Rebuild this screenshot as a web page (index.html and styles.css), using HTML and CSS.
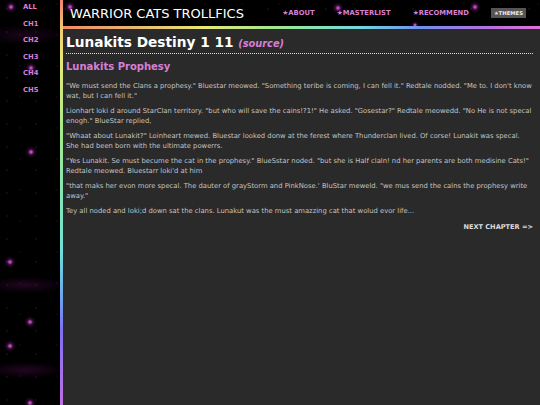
FILE: index.html
```html
<!DOCTYPE html>
<html>
<head>
<meta charset="utf-8">
<link rel="stylesheet" href="styles.css">
</head>
<body>
<div class="page">
  <aside class="sidebar">
    <a class="side-link" href="#">ALL</a>
    <a class="side-link" href="#">CH1</a>
    <a class="side-link" href="#">CH2</a>
    <a class="side-link" href="#">CH3</a>
    <a class="side-link" href="#">CH4</a>
    <a class="side-link" href="#">CH5</a>
  </aside>
  <div class="main">
    <header class="topbar">
      <div class="site-title">WARRIOR CATS TROLLFICS</div>
      <nav class="topnav">
        <a class="top-link" href="#">★ABOUT</a>
        <a class="top-link" href="#">★MASTERLIST</a>
        <a class="top-link" href="#">★RECOMMEND</a>
        <button class="themes-btn">★THEMES</button>
      </nav>
    </header>
    <div class="rule"></div>
    <main class="content">
      <h1 class="story-title">Lunakits Destiny 1 11 <a class="source" href="#">(source)</a></h1>
      <h2 class="chapter-title">Lunakits Prophesy</h2>
      <p>"We must send the Clans a prophesy." Bluestar meowed. "Something teribe is coming, I can fell it." Redtale nodded. "Me to. I don't know wat, but I can fell it."</p>
      <p>Lionhart loki d around StarClan territory. "but who will save the cains!?1!" He asked. "Gosestar?" Redtale meowedd. "No He is not specal enogh." BlueStar replied,</p>
      <p>"Whaat about Lunakit?" Loinheart mewed. Bluestar looked donw at the ferest where Thunderclan lived. Of corse! Lunakit was specal. She had been born with the ultimate powerrs.</p>
      <p>"Yes Lunakit. Se must becume the cat in the prophesy." BlueSstar noded. "but she is Half claln! nd her parents are both medisine Cats!" Redtale meowed. Bluestarr loki'd at him</p>
      <p>"that maks her evon more specal. The dauter of grayStorm and PinkNose.' BluStar meweld. "we mus send the calns the prophesy write away."</p>
      <p>Tey all noded and loki;d down sat the clans. Lunakut was the must amazzing cat that wolud evor life...</p>
      <div class="next-row"><a class="next-link" href="#">NEXT CHAPTER =&gt;</a></div>
    </main>
  </div>
</div>
</body>
</html>
```
FILE: styles.css
```css
html, body {
  margin: 0;
  padding: 0;
}
body {
  width: 540px;
  height: 405px;
  overflow: hidden;
  font-family: "DejaVu Sans", Verdana, sans-serif;
  background-color: #000;
  background-image:
    radial-gradient(circle at 11px 7px, #e070e0 0, #b040b0 1px, rgba(160,40,160,0.25) 3px, transparent 6px),
    radial-gradient(circle at 31px 68px, #e070e0 0, #b040b0 1px, rgba(160,40,160,0.25) 3px, transparent 6px),
    radial-gradient(circle at 31px 152px, #e070e0 0, #b040b0 1px, rgba(160,40,160,0.25) 3px, transparent 6px),
    radial-gradient(circle at 10px 262px, #e070e0 0, #b040b0 1px, rgba(160,40,160,0.25) 3px, transparent 6px),
    radial-gradient(circle at 30px 322px, #e070e0 0, #b040b0 1px, rgba(160,40,160,0.25) 3px, transparent 6px),
    radial-gradient(circle at 10px 346px, #e070e0 0, #b040b0 1px, rgba(160,40,160,0.25) 3px, transparent 6px),
    radial-gradient(circle at 30px 403px, #e070e0 0, #b040b0 1px, rgba(160,40,160,0.25) 3px, transparent 6px),
    radial-gradient(circle at 70px 7px, #e070e0 0, #b040b0 1px, rgba(160,40,160,0.25) 3px, transparent 6px),
    radial-gradient(circle at 338px 8px, #e070e0 0, #b040b0 1px, rgba(160,40,160,0.25) 3px, transparent 6px),
    radial-gradient(circle at 475px 7px, #e070e0 0, #b040b0 1px, rgba(160,40,160,0.25) 3px, transparent 6px),
    radial-gradient(circle at 415px 25px, #e070e0 0, #b040b0 1px, rgba(160,40,160,0.25) 2px, transparent 4px),
    radial-gradient(ellipse 40px 8px at 25px 285px, rgba(110,20,110,0.3), transparent),
    radial-gradient(ellipse 40px 8px at 25px 370px, rgba(110,20,110,0.3), transparent),
    radial-gradient(ellipse 40px 10px at 25px 35px, rgba(110,20,110,0.25), transparent),
    radial-gradient(circle at 7px 9px, rgba(255,255,255,0.22) 0.4px, transparent 0.8px),
    radial-gradient(circle at 20px 4px, rgba(255,255,255,0.15) 0.4px, transparent 0.8px);
  background-size: auto, auto, auto, auto, auto, auto, auto, auto, auto, auto, auto, auto, auto, auto, 29px 23px, 37px 31px;
  background-repeat: no-repeat, no-repeat, no-repeat, no-repeat, no-repeat, no-repeat, no-repeat, no-repeat, no-repeat, no-repeat, no-repeat, no-repeat, no-repeat, no-repeat, repeat, repeat;
}
.page {
  display: grid;
  grid-template-columns: 60px 1fr;
  height: 405px;
}
.sidebar {
  display: flex;
  flex-direction: column;
  gap: 8px;
  padding: 3px 0 0 23px;
}
.side-link {
  color: #d77fd7;
  font-size: 6.8px;
  font-weight: bold;
  line-height: 8.6px;
  text-decoration: none;
}
.main {
  display: flex;
  flex-direction: column;
  border-left: 3px solid;
  border-image: linear-gradient(to bottom, #f08070 0px, #f0c870 30px, #e8e878 60px, #a0e890 140px, #70e0d8 250px, #6ea0f0 300px, #8070f0 330px, #c070e0 405px) 1;
}
.topbar {
  height: 26px;
  display: flex;
  align-items: center;
  justify-content: space-between;
  padding: 0 14px 0 7px;
}
.site-title {
  color: #fff;
  font-size: 13px;
  padding-top: 1px;
}
.topnav {
  display: flex;
  align-items: center;
  gap: 22px;
}
.top-link {
  color: #d77fd7;
  font-size: 6.8px;
  font-weight: bold;
  text-decoration: none;
}
.themes-btn {
  background: #555;
  color: #eee;
  border: 0;
  font-family: inherit;
  font-size: 5.3px;
  font-weight: bold;
  padding: 2px 3px;
  height: 10px;
  line-height: 6px;
}
.rule {
  height: 3px;
  background: linear-gradient(to right, #f08a66 0%, #e8b870 15%, #e8e878 30%, #9ee890 45%, #70d8e0 62%, #7090f0 75%, #b070e0 88%, #e070d8 100%);
}
.content {
  flex: 1;
  background: #2a2a2a;
  padding: 5px 7px 0 3px;
}
.story-title {
  margin: 0;
  color: #fff;
  font-size: 13.7px;
  font-weight: bold;
  line-height: 17px;
  padding-bottom: 1px;
  border-bottom: 1px dotted #ddd;
}
.source {
  color: #d77fd7;
  font-style: italic;
  font-size: 9.8px;
  text-decoration: none;
}
.chapter-title {
  margin: 7px 0 8px;
  color: #d77fd7;
  font-size: 10px;
  font-weight: bold;
  line-height: 12px;
}
.content p {
  margin: 0 1px 5px 0;
  color: #c4c4c4;
  font-size: 6.8px;
  line-height: 10px;
}
.next-row {
  display: flex;
  justify-content: flex-end;
  margin-top: 7px;
}
.next-link {
  color: #ddd;
  font-size: 6.6px;
  font-weight: bold;
  text-decoration: none;
}
```
